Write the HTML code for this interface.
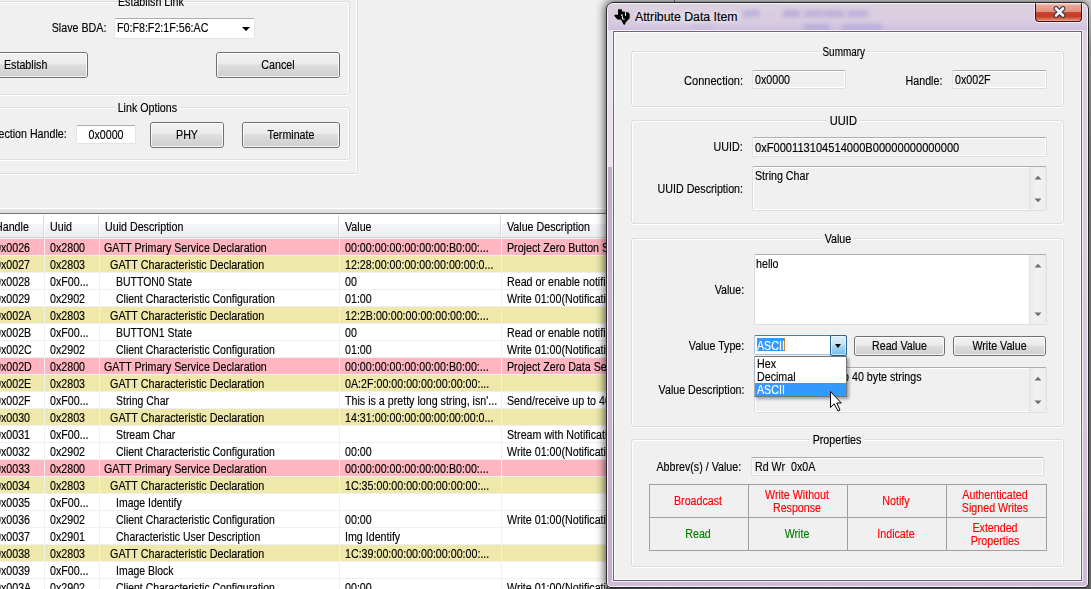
<!DOCTYPE html><html><head><meta charset="utf-8"><style>
*{margin:0;padding:0;box-sizing:border-box}
html,body{width:1091px;height:589px;overflow:hidden;background:#f0f0f0}
body{position:relative;font-family:"Liberation Sans",sans-serif}
body>div,body>svg{position:absolute}
.t{position:absolute;white-space:pre;color:#000;line-height:1;-webkit-text-stroke:0.15px currentColor;font-family:"Liberation Sans",sans-serif}
.grp{border:1px solid #d5dfe5;border-radius:3px;box-shadow:inset 1px 1px 0 #fff,inset -1px 0 0 #fff,0 1px 0 #fff}
.cap{background:#f0f0f0}
.btn{border:1px solid #707070;border-radius:3px;background:linear-gradient(#f2f2f2 0%,#ebebeb 45%,#dddddd 50%,#cfcfcf 100%)}
.btn .bi{position:absolute;left:0;top:0;right:0;bottom:0;border:1px solid rgba(255,255,255,.8);border-radius:2px}
.tb{border:1px solid #dbdfe6;border-top-color:#abadb3;border-radius:2px;box-shadow:inset 0 0 0 1px #fff}
.tbw{border:1px solid #e2e3ea;border-top-color:#abadb3;background:#fff;border-radius:2px}
.tri{position:absolute;width:0;height:0;border-left:4px solid transparent;border-right:4px solid transparent;border-top:4px solid #000}
.sb{border-left:1px solid #e3e3e3;background:linear-gradient(90deg,#e9e9e9,#f0f0f0 30%,#f0f0f0 70%,#ececec)}
.au{position:absolute;width:0;height:0;border-left:4px solid transparent;border-right:4px solid transparent;border-bottom:4px solid #808080}
.ad{position:absolute;width:0;height:0;border-left:4px solid transparent;border-right:4px solid transparent;border-top:4px solid #808080}
.frame{border:1px solid #2a262c;border-radius:7px 7px 5px 5px;background:linear-gradient(#ddd3e0 0,#dbd0de 35%,#d6c6da 70%,#d0bcd4 100%);box-shadow:inset 0 0 0 1px #f8f2fa}
.tbar{position:absolute;background:linear-gradient(#dcd1df,#d9cce0 70%,#cdc0e0 100%)}
.close{border:1px solid #3c1410;border-top:1px solid #f8e0da;border-radius:0 0 4px 4px;background:linear-gradient(#f6d0c8 0,#eaa698 8%,#e0907e 45%,#cc4430 50%,#c43a26 72%,#dc7a62 92%,#f0b8a8 100%);box-shadow:0 1px 0 rgba(255,255,255,.7),-1px 0 0 rgba(255,255,255,.5),1px 0 0 rgba(255,255,255,.5)}
.client{border:1px solid #6a6570;box-shadow:inset 0 0 0 1px #fff,0 0 0 1px #f4eef6;background:#f0f0f0}
</style></head><body><div class="grp" style="left:-10px;top:1px;width:360px;height:94px"></div>
<div class="t" style="left:118px;top:-4.16px;font-size:12px;transform:scaleX(0.8900);transform-origin:0 0;">Establish Link</div>
<div class="grp" style="left:-10px;top:107px;width:360px;height:53px"></div>
<div class="t cap" style="left:115px;top:101.84px;font-size:12px;transform:scaleX(0.8900);transform-origin:0 0;padding:0 3px">Link Options</div>
<div class="grp" style="left:-20px;top:-20px;width:378px;height:194px"></div>
<div class="t" style="right:985px;top:21.84px;font-size:12px;transform:scaleX(0.8900);transform-origin:100% 0;text-align:right;">Slave BDA:</div>
<div class="tbw" style="left:114px;top:18px;width:141px;height:21px"></div>
<div class="t" style="left:117px;top:21.84px;font-size:12px;transform:scaleX(0.8900);transform-origin:0 0;">F0:F8:F2:1F:56:AC</div>
<div class="tri" style="left:242px;top:27px"></div>
<div class="btn" style="left:-50px;top:52px;width:138px;height:26px"><div class="bi"></div></div>
<div class="t" style="left:4px;top:58.84px;font-size:12px;transform:scaleX(0.8900);transform-origin:0 0;">Establish</div>
<div class="btn" style="left:216px;top:52px;width:124px;height:26px"><div class="bi"></div></div>
<div class="t" style="left:216.0px;width:124px;top:58.84px;font-size:12px;transform:scaleX(0.8900);transform-origin:50% 0;text-align:center;">Cancel</div>
<div class="t" style="right:1024px;top:127.84px;font-size:12px;transform:scaleX(0.8900);transform-origin:100% 0;text-align:right;">ection Handle:</div>
<div class="tbw" style="left:76px;top:125px;width:60px;height:19px"></div>
<div class="t" style="left:76.5px;width:58px;top:128.84px;font-size:12px;transform:scaleX(0.8900);transform-origin:50% 0;text-align:center;">0x0000</div>
<div class="btn" style="left:150px;top:122px;width:74px;height:26px"><div class="bi"></div></div>
<div class="t" style="left:150.0px;width:74px;top:128.84px;font-size:12px;transform:scaleX(0.8900);transform-origin:50% 0;text-align:center;">PHY</div>
<div class="btn" style="left:242px;top:122px;width:98px;height:26px"><div class="bi"></div></div>
<div class="t" style="left:242.0px;width:98px;top:128.84px;font-size:12px;transform:scaleX(0.8900);transform-origin:50% 0;text-align:center;">Terminate</div>
<div style="left:0px;top:208px;width:606px;height:1px;background:#fff"></div>
<div style="left:0px;top:209px;width:606px;height:4px;background:linear-gradient(#e6e6e6,#dcdcdc)"></div>
<div style="left:0px;top:213px;width:606px;height:1px;background:#70757e"></div>
<div style="left:0px;top:214px;width:606px;height:10px;background:#fff"></div>
<div style="left:0px;top:224px;width:606px;height:13px;background:linear-gradient(#f4f5f7,#edeef1)"></div>
<div style="left:0px;top:237px;width:606px;height:1px;background:#d5d5d5"></div>
<div style="left:0px;top:238px;width:606px;height:1px;background:#f0f0f0"></div>
<div style="left:43px;top:215px;width:1px;height:22px;background:#d8d8dc"></div>
<div style="left:44px;top:215px;width:1px;height:22px;background:#fff"></div>
<div style="left:98px;top:215px;width:1px;height:22px;background:#d8d8dc"></div>
<div style="left:99px;top:215px;width:1px;height:22px;background:#fff"></div>
<div style="left:338px;top:215px;width:1px;height:22px;background:#d8d8dc"></div>
<div style="left:339px;top:215px;width:1px;height:22px;background:#fff"></div>
<div style="left:500px;top:215px;width:1px;height:22px;background:#d8d8dc"></div>
<div style="left:501px;top:215px;width:1px;height:22px;background:#fff"></div>
<div class="t" style="left:-5px;top:220.84px;font-size:12px;transform:scaleX(0.8900);transform-origin:0 0;">Handle</div>
<div class="t" style="left:50px;top:220.84px;font-size:12px;transform:scaleX(0.8900);transform-origin:0 0;">Uuid</div>
<div class="t" style="left:105px;top:220.84px;font-size:12px;transform:scaleX(0.8900);transform-origin:0 0;">Uuid Description</div>
<div class="t" style="left:345px;top:220.84px;font-size:12px;transform:scaleX(0.8900);transform-origin:0 0;">Value</div>
<div class="t" style="left:507px;top:220.84px;font-size:12px;transform:scaleX(0.8900);transform-origin:0 0;">Value Description</div>
<div style="left:0px;top:239px;width:606px;height:16px;background:#ffb6c1"></div>
<div style="left:0px;top:255px;width:606px;height:1px;background:#f0f0f0"></div>
<div class="t" style="left:-5px;top:241.84px;font-size:12px;transform:scaleX(0.8900);transform-origin:0 0;">0x0026</div>
<div class="t" style="left:50px;top:241.84px;font-size:12px;transform:scaleX(0.8900);transform-origin:0 0;">0x2800</div>
<div class="t" style="left:104px;top:241.84px;font-size:12px;transform:scaleX(0.8900);transform-origin:0 0;">GATT Primary Service Declaration</div>
<div class="t" style="left:345px;top:241.84px;font-size:12px;transform:scaleX(0.8900);transform-origin:0 0;">00:00:00:00:00:00:00:B0:00:...</div>
<div class="t" style="left:507px;top:241.84px;font-size:12px;transform:scaleX(0.8900);transform-origin:0 0;">Project Zero Button Service</div>
<div style="left:0px;top:256px;width:606px;height:16px;background:#eee8aa"></div>
<div style="left:0px;top:272px;width:606px;height:1px;background:#f0f0f0"></div>
<div class="t" style="left:-5px;top:258.84px;font-size:12px;transform:scaleX(0.8900);transform-origin:0 0;">0x0027</div>
<div class="t" style="left:50px;top:258.84px;font-size:12px;transform:scaleX(0.8900);transform-origin:0 0;">0x2803</div>
<div class="t" style="left:110px;top:258.84px;font-size:12px;transform:scaleX(0.8989);transform-origin:0 0;">GATT Characteristic Declaration</div>
<div class="t" style="left:345px;top:258.84px;font-size:12px;transform:scaleX(0.8900);transform-origin:0 0;">12:28:00:00:00:00:00:00:00:0...</div>
<div class="t" style="left:507px;top:258.84px;font-size:12px;transform:scaleX(0.8900);transform-origin:0 0;"></div>
<div style="left:0px;top:273px;width:606px;height:16px;background:#ffffff"></div>
<div style="left:0px;top:289px;width:606px;height:1px;background:#f0f0f0"></div>
<div class="t" style="left:-5px;top:275.84px;font-size:12px;transform:scaleX(0.8900);transform-origin:0 0;">0x0028</div>
<div class="t" style="left:50px;top:275.84px;font-size:12px;transform:scaleX(0.8900);transform-origin:0 0;">0xF00...</div>
<div class="t" style="left:116px;top:275.84px;font-size:12px;transform:scaleX(0.8722);transform-origin:0 0;">BUTTON0 State</div>
<div class="t" style="left:345px;top:275.84px;font-size:12px;transform:scaleX(0.8900);transform-origin:0 0;">00</div>
<div class="t" style="left:507px;top:275.84px;font-size:12px;transform:scaleX(0.8900);transform-origin:0 0;">Read or enable notifications</div>
<div style="left:0px;top:290px;width:606px;height:16px;background:#ffffff"></div>
<div style="left:0px;top:306px;width:606px;height:1px;background:#f0f0f0"></div>
<div class="t" style="left:-5px;top:292.84px;font-size:12px;transform:scaleX(0.8900);transform-origin:0 0;">0x0029</div>
<div class="t" style="left:50px;top:292.84px;font-size:12px;transform:scaleX(0.8900);transform-origin:0 0;">0x2902</div>
<div class="t" style="left:116px;top:292.84px;font-size:12px;transform:scaleX(0.8722);transform-origin:0 0;">Client Characteristic Configuration</div>
<div class="t" style="left:345px;top:292.84px;font-size:12px;transform:scaleX(0.8900);transform-origin:0 0;">01:00</div>
<div class="t" style="left:507px;top:292.84px;font-size:12px;transform:scaleX(0.8900);transform-origin:0 0;">Write 01:00(Notifications)</div>
<div style="left:0px;top:307px;width:606px;height:16px;background:#eee8aa"></div>
<div style="left:0px;top:323px;width:606px;height:1px;background:#f0f0f0"></div>
<div class="t" style="left:-5px;top:309.84px;font-size:12px;transform:scaleX(0.8900);transform-origin:0 0;">0x002A</div>
<div class="t" style="left:50px;top:309.84px;font-size:12px;transform:scaleX(0.8900);transform-origin:0 0;">0x2803</div>
<div class="t" style="left:110px;top:309.84px;font-size:12px;transform:scaleX(0.8989);transform-origin:0 0;">GATT Characteristic Declaration</div>
<div class="t" style="left:345px;top:309.84px;font-size:12px;transform:scaleX(0.8900);transform-origin:0 0;">12:2B:00:00:00:00:00:00:00:...</div>
<div class="t" style="left:507px;top:309.84px;font-size:12px;transform:scaleX(0.8900);transform-origin:0 0;"></div>
<div style="left:0px;top:324px;width:606px;height:16px;background:#ffffff"></div>
<div style="left:0px;top:340px;width:606px;height:1px;background:#f0f0f0"></div>
<div class="t" style="left:-5px;top:326.84px;font-size:12px;transform:scaleX(0.8900);transform-origin:0 0;">0x002B</div>
<div class="t" style="left:50px;top:326.84px;font-size:12px;transform:scaleX(0.8900);transform-origin:0 0;">0xF00...</div>
<div class="t" style="left:116px;top:326.84px;font-size:12px;transform:scaleX(0.8722);transform-origin:0 0;">BUTTON1 State</div>
<div class="t" style="left:345px;top:326.84px;font-size:12px;transform:scaleX(0.8900);transform-origin:0 0;">00</div>
<div class="t" style="left:507px;top:326.84px;font-size:12px;transform:scaleX(0.8900);transform-origin:0 0;">Read or enable notifications</div>
<div style="left:0px;top:341px;width:606px;height:16px;background:#ffffff"></div>
<div style="left:0px;top:357px;width:606px;height:1px;background:#f0f0f0"></div>
<div class="t" style="left:-5px;top:343.84px;font-size:12px;transform:scaleX(0.8900);transform-origin:0 0;">0x002C</div>
<div class="t" style="left:50px;top:343.84px;font-size:12px;transform:scaleX(0.8900);transform-origin:0 0;">0x2902</div>
<div class="t" style="left:116px;top:343.84px;font-size:12px;transform:scaleX(0.8722);transform-origin:0 0;">Client Characteristic Configuration</div>
<div class="t" style="left:345px;top:343.84px;font-size:12px;transform:scaleX(0.8900);transform-origin:0 0;">01:00</div>
<div class="t" style="left:507px;top:343.84px;font-size:12px;transform:scaleX(0.8900);transform-origin:0 0;">Write 01:00(Notifications)</div>
<div style="left:0px;top:358px;width:606px;height:16px;background:#ffb6c1"></div>
<div style="left:0px;top:374px;width:606px;height:1px;background:#f0f0f0"></div>
<div class="t" style="left:-5px;top:360.84px;font-size:12px;transform:scaleX(0.8900);transform-origin:0 0;">0x002D</div>
<div class="t" style="left:50px;top:360.84px;font-size:12px;transform:scaleX(0.8900);transform-origin:0 0;">0x2800</div>
<div class="t" style="left:104px;top:360.84px;font-size:12px;transform:scaleX(0.8900);transform-origin:0 0;">GATT Primary Service Declaration</div>
<div class="t" style="left:345px;top:360.84px;font-size:12px;transform:scaleX(0.8900);transform-origin:0 0;">00:00:00:00:00:00:00:B0:00:...</div>
<div class="t" style="left:507px;top:360.84px;font-size:12px;transform:scaleX(0.8900);transform-origin:0 0;">Project Zero Data Service</div>
<div style="left:0px;top:375px;width:606px;height:16px;background:#eee8aa"></div>
<div style="left:0px;top:391px;width:606px;height:1px;background:#f0f0f0"></div>
<div class="t" style="left:-5px;top:377.84px;font-size:12px;transform:scaleX(0.8900);transform-origin:0 0;">0x002E</div>
<div class="t" style="left:50px;top:377.84px;font-size:12px;transform:scaleX(0.8900);transform-origin:0 0;">0x2803</div>
<div class="t" style="left:110px;top:377.84px;font-size:12px;transform:scaleX(0.8989);transform-origin:0 0;">GATT Characteristic Declaration</div>
<div class="t" style="left:345px;top:377.84px;font-size:12px;transform:scaleX(0.8900);transform-origin:0 0;">0A:2F:00:00:00:00:00:00:00:...</div>
<div class="t" style="left:507px;top:377.84px;font-size:12px;transform:scaleX(0.8900);transform-origin:0 0;"></div>
<div style="left:0px;top:392px;width:606px;height:16px;background:#ffffff"></div>
<div style="left:0px;top:408px;width:606px;height:1px;background:#f0f0f0"></div>
<div class="t" style="left:-5px;top:394.84px;font-size:12px;transform:scaleX(0.8900);transform-origin:0 0;">0x002F</div>
<div class="t" style="left:50px;top:394.84px;font-size:12px;transform:scaleX(0.8900);transform-origin:0 0;">0xF00...</div>
<div class="t" style="left:116px;top:394.84px;font-size:12px;transform:scaleX(0.8722);transform-origin:0 0;">String Char</div>
<div class="t" style="left:345px;top:394.84px;font-size:12px;transform:scaleX(0.8900);transform-origin:0 0;">This is a pretty long string, isn&#x27;...</div>
<div class="t" style="left:507px;top:394.84px;font-size:12px;transform:scaleX(0.8900);transform-origin:0 0;">Send/receive up to 40 byte</div>
<div style="left:0px;top:409px;width:606px;height:16px;background:#eee8aa"></div>
<div style="left:0px;top:425px;width:606px;height:1px;background:#f0f0f0"></div>
<div class="t" style="left:-5px;top:411.84px;font-size:12px;transform:scaleX(0.8900);transform-origin:0 0;">0x0030</div>
<div class="t" style="left:50px;top:411.84px;font-size:12px;transform:scaleX(0.8900);transform-origin:0 0;">0x2803</div>
<div class="t" style="left:110px;top:411.84px;font-size:12px;transform:scaleX(0.8989);transform-origin:0 0;">GATT Characteristic Declaration</div>
<div class="t" style="left:345px;top:411.84px;font-size:12px;transform:scaleX(0.8900);transform-origin:0 0;">14:31:00:00:00:00:00:00:00:0...</div>
<div class="t" style="left:507px;top:411.84px;font-size:12px;transform:scaleX(0.8900);transform-origin:0 0;"></div>
<div style="left:0px;top:426px;width:606px;height:16px;background:#ffffff"></div>
<div style="left:0px;top:442px;width:606px;height:1px;background:#f0f0f0"></div>
<div class="t" style="left:-5px;top:428.84px;font-size:12px;transform:scaleX(0.8900);transform-origin:0 0;">0x0031</div>
<div class="t" style="left:50px;top:428.84px;font-size:12px;transform:scaleX(0.8900);transform-origin:0 0;">0xF00...</div>
<div class="t" style="left:116px;top:428.84px;font-size:12px;transform:scaleX(0.8722);transform-origin:0 0;">Stream Char</div>
<div class="t" style="left:345px;top:428.84px;font-size:12px;transform:scaleX(0.8900);transform-origin:0 0;"></div>
<div class="t" style="left:507px;top:428.84px;font-size:12px;transform:scaleX(0.8900);transform-origin:0 0;">Stream with Notifications</div>
<div style="left:0px;top:443px;width:606px;height:16px;background:#ffffff"></div>
<div style="left:0px;top:459px;width:606px;height:1px;background:#f0f0f0"></div>
<div class="t" style="left:-5px;top:445.84px;font-size:12px;transform:scaleX(0.8900);transform-origin:0 0;">0x0032</div>
<div class="t" style="left:50px;top:445.84px;font-size:12px;transform:scaleX(0.8900);transform-origin:0 0;">0x2902</div>
<div class="t" style="left:116px;top:445.84px;font-size:12px;transform:scaleX(0.8722);transform-origin:0 0;">Client Characteristic Configuration</div>
<div class="t" style="left:345px;top:445.84px;font-size:12px;transform:scaleX(0.8900);transform-origin:0 0;">00:00</div>
<div class="t" style="left:507px;top:445.84px;font-size:12px;transform:scaleX(0.8900);transform-origin:0 0;">Write 01:00(Notifications)</div>
<div style="left:0px;top:460px;width:606px;height:16px;background:#ffb6c1"></div>
<div style="left:0px;top:476px;width:606px;height:1px;background:#f0f0f0"></div>
<div class="t" style="left:-5px;top:462.84px;font-size:12px;transform:scaleX(0.8900);transform-origin:0 0;">0x0033</div>
<div class="t" style="left:50px;top:462.84px;font-size:12px;transform:scaleX(0.8900);transform-origin:0 0;">0x2800</div>
<div class="t" style="left:104px;top:462.84px;font-size:12px;transform:scaleX(0.8900);transform-origin:0 0;">GATT Primary Service Declaration</div>
<div class="t" style="left:345px;top:462.84px;font-size:12px;transform:scaleX(0.8900);transform-origin:0 0;">00:00:00:00:00:00:00:B0:00:...</div>
<div class="t" style="left:507px;top:462.84px;font-size:12px;transform:scaleX(0.8900);transform-origin:0 0;"></div>
<div style="left:0px;top:477px;width:606px;height:16px;background:#eee8aa"></div>
<div style="left:0px;top:493px;width:606px;height:1px;background:#f0f0f0"></div>
<div class="t" style="left:-5px;top:479.84px;font-size:12px;transform:scaleX(0.8900);transform-origin:0 0;">0x0034</div>
<div class="t" style="left:50px;top:479.84px;font-size:12px;transform:scaleX(0.8900);transform-origin:0 0;">0x2803</div>
<div class="t" style="left:110px;top:479.84px;font-size:12px;transform:scaleX(0.8989);transform-origin:0 0;">GATT Characteristic Declaration</div>
<div class="t" style="left:345px;top:479.84px;font-size:12px;transform:scaleX(0.8900);transform-origin:0 0;">1C:35:00:00:00:00:00:00:00:...</div>
<div class="t" style="left:507px;top:479.84px;font-size:12px;transform:scaleX(0.8900);transform-origin:0 0;"></div>
<div style="left:0px;top:494px;width:606px;height:16px;background:#ffffff"></div>
<div style="left:0px;top:510px;width:606px;height:1px;background:#f0f0f0"></div>
<div class="t" style="left:-5px;top:496.84px;font-size:12px;transform:scaleX(0.8900);transform-origin:0 0;">0x0035</div>
<div class="t" style="left:50px;top:496.84px;font-size:12px;transform:scaleX(0.8900);transform-origin:0 0;">0xF00...</div>
<div class="t" style="left:116px;top:496.84px;font-size:12px;transform:scaleX(0.8722);transform-origin:0 0;">Image Identify</div>
<div class="t" style="left:345px;top:496.84px;font-size:12px;transform:scaleX(0.8900);transform-origin:0 0;"></div>
<div class="t" style="left:507px;top:496.84px;font-size:12px;transform:scaleX(0.8900);transform-origin:0 0;"></div>
<div style="left:0px;top:511px;width:606px;height:16px;background:#ffffff"></div>
<div style="left:0px;top:527px;width:606px;height:1px;background:#f0f0f0"></div>
<div class="t" style="left:-5px;top:513.84px;font-size:12px;transform:scaleX(0.8900);transform-origin:0 0;">0x0036</div>
<div class="t" style="left:50px;top:513.84px;font-size:12px;transform:scaleX(0.8900);transform-origin:0 0;">0x2902</div>
<div class="t" style="left:116px;top:513.84px;font-size:12px;transform:scaleX(0.8722);transform-origin:0 0;">Client Characteristic Configuration</div>
<div class="t" style="left:345px;top:513.84px;font-size:12px;transform:scaleX(0.8900);transform-origin:0 0;">00:00</div>
<div class="t" style="left:507px;top:513.84px;font-size:12px;transform:scaleX(0.8900);transform-origin:0 0;">Write 01:00(Notifications)</div>
<div style="left:0px;top:528px;width:606px;height:16px;background:#ffffff"></div>
<div style="left:0px;top:544px;width:606px;height:1px;background:#f0f0f0"></div>
<div class="t" style="left:-5px;top:530.84px;font-size:12px;transform:scaleX(0.8900);transform-origin:0 0;">0x0037</div>
<div class="t" style="left:50px;top:530.84px;font-size:12px;transform:scaleX(0.8900);transform-origin:0 0;">0x2901</div>
<div class="t" style="left:116px;top:530.84px;font-size:12px;transform:scaleX(0.8722);transform-origin:0 0;">Characteristic User Description</div>
<div class="t" style="left:345px;top:530.84px;font-size:12px;transform:scaleX(0.8900);transform-origin:0 0;">Img Identify</div>
<div class="t" style="left:507px;top:530.84px;font-size:12px;transform:scaleX(0.8900);transform-origin:0 0;"></div>
<div style="left:0px;top:545px;width:606px;height:16px;background:#eee8aa"></div>
<div style="left:0px;top:561px;width:606px;height:1px;background:#f0f0f0"></div>
<div class="t" style="left:-5px;top:547.84px;font-size:12px;transform:scaleX(0.8900);transform-origin:0 0;">0x0038</div>
<div class="t" style="left:50px;top:547.84px;font-size:12px;transform:scaleX(0.8900);transform-origin:0 0;">0x2803</div>
<div class="t" style="left:110px;top:547.84px;font-size:12px;transform:scaleX(0.8989);transform-origin:0 0;">GATT Characteristic Declaration</div>
<div class="t" style="left:345px;top:547.84px;font-size:12px;transform:scaleX(0.8900);transform-origin:0 0;">1C:39:00:00:00:00:00:00:00:...</div>
<div class="t" style="left:507px;top:547.84px;font-size:12px;transform:scaleX(0.8900);transform-origin:0 0;"></div>
<div style="left:0px;top:562px;width:606px;height:16px;background:#ffffff"></div>
<div style="left:0px;top:578px;width:606px;height:1px;background:#f0f0f0"></div>
<div class="t" style="left:-5px;top:564.84px;font-size:12px;transform:scaleX(0.8900);transform-origin:0 0;">0x0039</div>
<div class="t" style="left:50px;top:564.84px;font-size:12px;transform:scaleX(0.8900);transform-origin:0 0;">0xF00...</div>
<div class="t" style="left:116px;top:564.84px;font-size:12px;transform:scaleX(0.8722);transform-origin:0 0;">Image Block</div>
<div class="t" style="left:345px;top:564.84px;font-size:12px;transform:scaleX(0.8900);transform-origin:0 0;"></div>
<div class="t" style="left:507px;top:564.84px;font-size:12px;transform:scaleX(0.8900);transform-origin:0 0;"></div>
<div style="left:0px;top:579px;width:606px;height:16px;background:#ffffff"></div>
<div style="left:0px;top:595px;width:606px;height:1px;background:#f0f0f0"></div>
<div class="t" style="left:-5px;top:581.84px;font-size:12px;transform:scaleX(0.8900);transform-origin:0 0;">0x003A</div>
<div class="t" style="left:50px;top:581.84px;font-size:12px;transform:scaleX(0.8900);transform-origin:0 0;">0x2902</div>
<div class="t" style="left:116px;top:581.84px;font-size:12px;transform:scaleX(0.8722);transform-origin:0 0;">Client Characteristic Configuration</div>
<div class="t" style="left:345px;top:581.84px;font-size:12px;transform:scaleX(0.8900);transform-origin:0 0;">00:00</div>
<div class="t" style="left:507px;top:581.84px;font-size:12px;transform:scaleX(0.8900);transform-origin:0 0;">Write 01:00(Notifications)</div>
<div style="left:44px;top:239px;width:1px;height:350px;background:#f0f0f0"></div>
<div style="left:99px;top:239px;width:1px;height:350px;background:#f0f0f0"></div>
<div style="left:339px;top:239px;width:1px;height:350px;background:#f0f0f0"></div>
<div style="left:501px;top:239px;width:1px;height:350px;background:#f0f0f0"></div>
<div style="left:606px;top:2px;width:483px;height:586px;border-radius:7px 7px 5px 5px;box-shadow:0 0 10px 1px rgba(0,0,0,.72)"></div>
<div style="left:1078px;top:577px;width:13px;height:12px;background:#555"></div>
<div style="left:1089px;top:0;width:2px;height:589px;background:linear-gradient(#c4c4c4,#8a8a8a 50px,#6e6e6e 150px,#666)"></div>
<div style="left:606px;top:588px;width:485px;height:1px;background:linear-gradient(90deg,#3a3a3a,#5a5a5a 30%,#4a4a4a 60%,#555)"></div>
<div class="frame" style="left:606px;top:2px;width:483px;height:586px"></div>
<div class="tbar" style="left:608px;top:4px;width:479px;height:26px;border-radius:5px 5px 0 0"></div>
<div style="left:743px;top:10px;width:17px;height:7px;background:rgba(110,100,210,0.26);filter:blur(2px)"></div>
<div style="left:769px;top:12px;width:4px;height:3px;background:rgba(110,100,210,0.12);filter:blur(2px)"></div>
<div style="left:783px;top:10px;width:17px;height:7px;background:rgba(110,100,210,0.3);filter:blur(2px)"></div>
<div style="left:804px;top:10px;width:19px;height:7px;background:rgba(110,100,210,0.26);filter:blur(2px)"></div>
<div style="left:824px;top:10px;width:20px;height:7px;background:rgba(110,100,210,0.28);filter:blur(2px)"></div>
<div style="left:847px;top:10px;width:21px;height:7px;background:rgba(110,100,210,0.26);filter:blur(2px)"></div>
<div style="left:693px;top:24px;width:19px;height:5px;background:rgba(110,100,210,0.1);filter:blur(2px)"></div>
<div style="left:804px;top:24px;width:26px;height:6px;background:rgba(110,100,210,0.26);filter:blur(2px)"></div>
<div style="left:842px;top:24px;width:40px;height:6px;background:rgba(110,100,210,0.24);filter:blur(2px)"></div>
<svg style="position:absolute;left:612px;top:7px" width="22" height="20" viewBox="0 0 22 20"><path d="M6 2.2H9.9V4.4L11.3 4.6L14 5L16.5 5.6L17.7 7V11.2L15.5 13.5L13.6 15.5L13 17.8L11.6 17.6L9.2 13L8 12.5L5.5 12.6L4.5 11.5L2.4 9V7.8H6.1Z" fill="#000"/><circle cx="9.9" cy="8.1" r="0.9" fill="#fff"/><path d="M10.4 9.2V11.3Q10.6 12.4 12.6 12.3" stroke="#fff" stroke-width="1.1" fill="none"/><path d="M13.5 5.2V8.8" stroke="#fff" stroke-width="1.1"/></svg>
<div class="t" style="left:635px;top:10.59px;font-size:12.3px;transform:scaleX(1.0000);transform-origin:0 0;color:#000;text-shadow:0 0 5px rgba(255,255,255,.9),0 0 9px rgba(255,255,255,.6)">Attribute Data Item</div>
<div class="close" style="left:1035px;top:3px;width:47px;height:19px"></div>
<svg style="position:absolute;left:1053px;top:6px" width="13" height="12" viewBox="0 0 13 12"><path d="M3 2.5L10 9.5M10 2.5L3 9.5" stroke="#2e3548" stroke-width="4.6" stroke-linecap="round"/><path d="M3 2.5L10 9.5M10 2.5L3 9.5" stroke="#f4f4f6" stroke-width="2.6" stroke-linecap="round"/></svg>
<div style="left:608px;top:30px;width:4px;height:137px;background:rgba(255,255,255,.38)"></div>
<div style="left:608px;top:167px;width:4px;height:413px;background:linear-gradient(#c2adc6,#c8b4cc 40%,#c4b0c8)"></div>
<div style="left:674px;top:0px;width:1px;height:2px;background:#505050"></div>
<div class="client" style="left:613px;top:31px;width:469px;height:550px"></div>
<div class="grp" style="left:631px;top:51px;width:433px;height:56px"></div>
<div class="t cap" style="left:820px;top:45.84px;font-size:12px;transform:scaleX(0.8277);transform-origin:0 0;padding:0 3px">Summary</div>
<div class="t" style="right:348px;top:74.84px;font-size:12px;transform:scaleX(0.9211);transform-origin:100% 0;text-align:right;">Connection:</div>
<div class="tb" style="left:752px;top:70px;width:94px;height:19px;background:#f0f0f0"></div>
<div class="t" style="left:755px;top:73.84px;font-size:12px;transform:scaleX(0.8900);transform-origin:0 0;">0x0000</div>
<div class="t" style="right:149px;top:74.84px;font-size:12px;transform:scaleX(0.8900);transform-origin:100% 0;text-align:right;">Handle:</div>
<div class="tb" style="left:952px;top:70px;width:95px;height:19px;background:#f0f0f0"></div>
<div class="t" style="left:955px;top:73.84px;font-size:12px;transform:scaleX(0.8900);transform-origin:0 0;">0x002F</div>
<div class="grp" style="left:631px;top:120px;width:433px;height:104px"></div>
<div class="t cap" style="left:827px;top:114.84px;font-size:12px;transform:scaleX(0.9256);transform-origin:0 0;padding:0 3px">UUID</div>
<div class="t" style="right:348px;top:140.84px;font-size:12px;transform:scaleX(0.8900);transform-origin:100% 0;text-align:right;">UUID:</div>
<div class="tb" style="left:752px;top:137px;width:295px;height:20px;background:#f0f0f0"></div>
<div class="t" style="left:755px;top:141.84px;font-size:12px;transform:scaleX(0.9256);transform-origin:0 0;">0xF000113104514000B00000000000000</div>
<div class="t" style="right:348px;top:182.84px;font-size:12px;transform:scaleX(0.8900);transform-origin:100% 0;text-align:right;">UUID Description:</div>
<div class="tb" style="left:752px;top:166px;width:295px;height:45px;background:#f0f0f0"></div>
<div class="t" style="left:755px;top:169.84px;font-size:12px;transform:scaleX(0.8900);transform-origin:0 0;">String Char</div>
<div class="sb" style="left:1029px;top:167px;width:17px;height:43px"></div>
<svg style="position:absolute;left:1033.5px;top:175px" width="8" height="5" viewBox="0 0 8 5"><path d="M0.5 4.5L4 0.8L7.5 4.5Z" fill="#707070"/></svg>
<svg style="position:absolute;left:1033.5px;top:198px" width="8" height="5" viewBox="0 0 8 5"><path d="M0.5 0.5L4 4.2L7.5 0.5Z" fill="#707070"/></svg>
<div class="grp" style="left:631px;top:238px;width:433px;height:189px"></div>
<div class="t cap" style="left:822px;top:232.84px;font-size:12px;transform:scaleX(0.8900);transform-origin:0 0;padding:0 3px">Value</div>
<div class="t" style="right:346.5px;top:283.84px;font-size:12px;transform:scaleX(0.8900);transform-origin:100% 0;text-align:right;">Value:</div>
<div class="tb" style="left:754px;top:254px;width:293px;height:71px;background:#fff"></div>
<div class="t" style="left:756px;top:257.84px;font-size:12px;transform:scaleX(0.8900);transform-origin:0 0;">hello</div>
<div class="sb" style="left:1029px;top:255px;width:17px;height:69px"></div>
<svg style="position:absolute;left:1033.5px;top:263px" width="8" height="5" viewBox="0 0 8 5"><path d="M0.5 4.5L4 0.8L7.5 4.5Z" fill="#707070"/></svg>
<svg style="position:absolute;left:1033.5px;top:312px" width="8" height="5" viewBox="0 0 8 5"><path d="M0.5 0.5L4 4.2L7.5 0.5Z" fill="#707070"/></svg>
<div class="t" style="right:346.5px;top:339.84px;font-size:12px;transform:scaleX(0.8900);transform-origin:100% 0;text-align:right;">Value Type:</div>
<div class="t" style="right:346.5px;top:383.84px;font-size:12px;transform:scaleX(0.8900);transform-origin:100% 0;text-align:right;">Value Description:</div>
<div class="tb" style="left:754px;top:367px;width:293px;height:46px;background:#f0f0f0"></div>
<div class="t" style="left:760px;top:370.84px;font-size:12px;transform:scaleX(0.8900);transform-origin:0 0;">Send/receive up to 40 byte strings</div>
<div class="sb" style="left:1029px;top:368px;width:17px;height:44px"></div>
<svg style="position:absolute;left:1033.5px;top:376px" width="8" height="5" viewBox="0 0 8 5"><path d="M0.5 4.5L4 0.8L7.5 4.5Z" fill="#707070"/></svg>
<svg style="position:absolute;left:1033.5px;top:400px" width="8" height="5" viewBox="0 0 8 5"><path d="M0.5 0.5L4 4.2L7.5 0.5Z" fill="#707070"/></svg>
<div class="btn" style="left:854px;top:336px;width:91px;height:20px"><div class="bi"></div></div>
<div class="t" style="left:854.0px;width:91px;top:339.84px;font-size:12px;transform:scaleX(0.8900);transform-origin:50% 0;text-align:center;">Read Value</div>
<div class="btn" style="left:953px;top:336px;width:93px;height:20px"><div class="bi"></div></div>
<div class="t" style="left:953.0px;width:93px;top:339.84px;font-size:12px;transform:scaleX(0.8900);transform-origin:50% 0;text-align:center;">Write Value</div>
<div class="tbw" style="left:754px;top:335px;width:93px;height:20px;border-color:#a9c8e0;border-top-color:#3c7fb1"></div>
<div style="left:830px;top:335px;width:17px;height:21px;border-radius:2px;background:linear-gradient(#dff0fa,#c4e4f7 45%,#a4d4f2 55%,#7cc0ea);border:1px solid #2c628b;box-shadow:inset 0 0 0 1px rgba(255,255,255,.5)"></div>
<div class="tri" style="left:835px;top:344px;border-left-width:3.5px;border-right-width:3.5px"></div>
<div style="left:757px;top:338px;width:28px;height:13px;background:#3399ff"></div>
<div style="left:784px;top:338px;width:1px;height:13px;background:#d27a18"></div>
<div class="t" style="left:757px;top:339.84px;font-size:12px;transform:scaleX(0.8900);transform-origin:0 0;color:#fff">ASCII</div>
<div style="left:754px;top:356px;width:93px;height:41px;background:#fff;border:1px solid #767676;border-left-color:#a8b4c0;box-shadow:2px 2px 3px rgba(0,0,0,.35)"></div>
<div class="t" style="left:757px;top:357.84px;font-size:12px;transform:scaleX(0.8900);transform-origin:0 0;">Hex</div>
<div class="t" style="left:757px;top:370.84px;font-size:12px;transform:scaleX(0.8900);transform-origin:0 0;">Decimal</div>
<div style="left:755px;top:383px;width:91px;height:13px;background:#3399ff"></div>
<div class="t" style="left:757px;top:383.84px;font-size:12px;transform:scaleX(0.8900);transform-origin:0 0;color:#fff">ASCII</div>
<svg style="position:absolute;left:830px;top:391px" width="13" height="22" viewBox="0 0 13 22"><path d="M0.5 0.5V16.5L4.2 12.8L8 20L10 19L6.8 12H11.3Z" fill="#fff" stroke="#000" stroke-width="1" stroke-linejoin="miter"/></svg>
<div class="grp" style="left:631px;top:439px;width:433px;height:128px"></div>
<div class="t cap" style="left:810px;top:433.84px;font-size:12px;transform:scaleX(0.8900);transform-origin:0 0;padding:0 3px">Properties</div>
<div class="t" style="right:350px;top:460.84px;font-size:12px;transform:scaleX(0.8900);transform-origin:100% 0;text-align:right;">Abbrev(s) / Value:</div>
<div class="tb" style="left:751px;top:457px;width:293px;height:19px;background:#f0f0f0"></div>
<div class="t" style="left:755px;top:460.84px;font-size:12px;transform:scaleX(0.8900);transform-origin:0 0;">Rd Wr  0x0A</div>
<div style="left:649px;top:484px;width:398px;height:67px;border:1px solid #a0a0a0"></div>
<div style="left:748px;top:484px;width:1px;height:67px;background:#a0a0a0"></div>
<div style="left:847px;top:484px;width:1px;height:67px;background:#a0a0a0"></div>
<div style="left:946px;top:484px;width:1px;height:67px;background:#a0a0a0"></div>
<div style="left:649px;top:517px;width:398px;height:1px;background:#a0a0a0"></div>
<div class="t" style="left:649.0px;width:98px;top:494.84px;font-size:12px;transform:scaleX(0.8900);transform-origin:50% 0;text-align:center;color:#ff0000">Broadcast</div>
<div class="t" style="left:748.0px;width:98px;top:488.84px;font-size:12px;transform:scaleX(0.8900);transform-origin:50% 0;text-align:center;color:#ff0000">Write Without</div>
<div class="t" style="left:748.0px;width:98px;top:501.84px;font-size:12px;transform:scaleX(0.8900);transform-origin:50% 0;text-align:center;color:#ff0000">Response</div>
<div class="t" style="left:847.0px;width:98px;top:494.84px;font-size:12px;transform:scaleX(0.8900);transform-origin:50% 0;text-align:center;color:#ff0000">Notify</div>
<div class="t" style="left:946.0px;width:98px;top:488.84px;font-size:12px;transform:scaleX(0.8900);transform-origin:50% 0;text-align:center;color:#ff0000">Authenticated</div>
<div class="t" style="left:946.0px;width:98px;top:501.84px;font-size:12px;transform:scaleX(0.8900);transform-origin:50% 0;text-align:center;color:#ff0000">Signed Writes</div>
<div class="t" style="left:649.0px;width:98px;top:527.84px;font-size:12px;transform:scaleX(0.8900);transform-origin:50% 0;text-align:center;color:#008000">Read</div>
<div class="t" style="left:748.0px;width:98px;top:527.84px;font-size:12px;transform:scaleX(0.8900);transform-origin:50% 0;text-align:center;color:#008000">Write</div>
<div class="t" style="left:847.0px;width:98px;top:527.84px;font-size:12px;transform:scaleX(0.8900);transform-origin:50% 0;text-align:center;color:#ff0000">Indicate</div>
<div class="t" style="left:946.0px;width:98px;top:521.84px;font-size:12px;transform:scaleX(0.8900);transform-origin:50% 0;text-align:center;color:#ff0000">Extended</div>
<div class="t" style="left:946.0px;width:98px;top:534.84px;font-size:12px;transform:scaleX(0.8900);transform-origin:50% 0;text-align:center;color:#ff0000">Properties</div></body></html>
